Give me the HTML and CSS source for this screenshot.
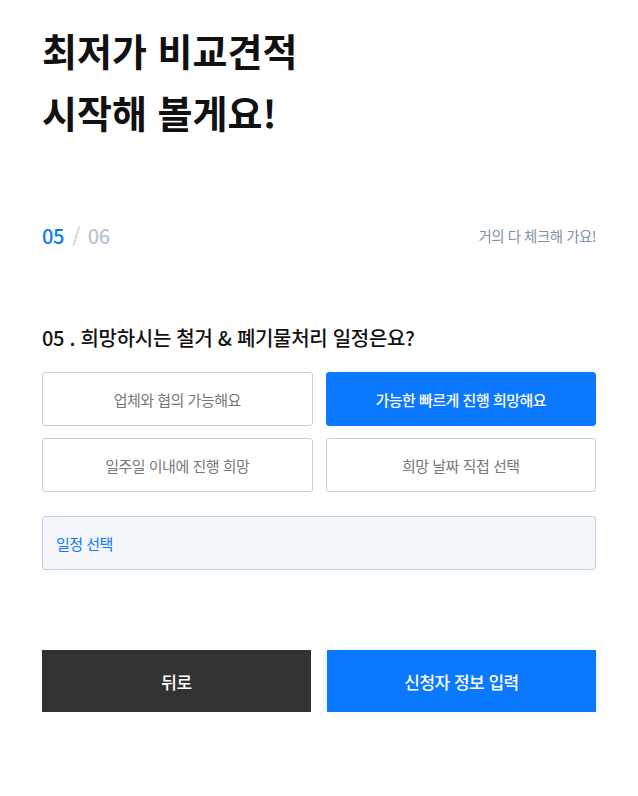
FILE: index.html
```html
<!DOCTYPE html>
<html lang="ko">
<head>
  <meta charset="UTF-8" />
  <meta name="viewport" content="width=device-width, initial-scale=1" />
  <title>견적 요청</title>
  <link rel="stylesheet" href="styles.css">
</head>
<body>

<div class="wrap">
  <h1 class="title">최저가 비교견적<br>시작해 볼게요!</h1>

  <div class="progress">
    <div class="step"><span class="now">05</span><span class="slash">/</span><span class="total">06</span></div>
    <div class="hint">거의 다 체크해 가요!</div>
  </div>

  <h2 class="question">05 . 희망하시는 철거 &amp; 폐기물처리 일정은요?</h2>

  <div class="options">
    <button class="option">업체와 협의 가능해요</button>
    <button class="option active">가능한 빠르게 진행 희망해요</button>
    <button class="option">일주일 이내에 진행 희망</button>
    <button class="option">희망 날짜 직접 선택</button>
  </div>

  <div class="date-field">일정 선택</div>

  <div class="actions">
    <button class="btn back">뒤로</button>
    <button class="btn next">신청자 정보 입력</button>
  </div>
</div>

</body>
</html>
```

FILE: styles.css
```css
body {
  margin: 0;
  background: #fff;
  font-family: "Noto Sans CJK KR", "Noto Sans", sans-serif;
  color: #111;
}
.wrap {
  padding: 19px 42px 0;
}
.title {
  margin: 0;
  font-size: 38px;
  font-weight: 700;
  line-height: 62px;
  letter-spacing: 0;
  color: #111;
}
.progress {
  margin-top: 77px;
  display: flex;
  justify-content: space-between;
  align-items: center;
  height: 30px;
}
.step {
  font-size: 20px;
  font-weight: 500;
  letter-spacing: -0.3px;
}
.now {
  color: #0a78ff;
}
.slash {
  color: #c3cedc;
  margin: 0 8px;
  font-weight: 400;
}
.total {
  color: #b8c5d6;
}
.hint {
  font-size: 14.5px;
  color: #7f91a8;
  letter-spacing: -0.5px;
}
.question {
  margin: 75px 0 0;
  font-size: 20px;
  font-weight: 500;
  line-height: 26px;
  letter-spacing: -0.3px;
  color: #111;
}
.options {
  margin-top: 21px;
  display: grid;
  grid-template-columns: 1fr 1fr;
  gap: 12px 13px;
}
.option {
  height: 54px;
  background: #fff;
  border: 1px solid #c3cedc;
  border-radius: 3px;
  font-family: inherit;
  font-size: 15px;
  color: #777;
  letter-spacing: -0.5px;
  cursor: pointer;
}
.option.active {
  background: #0a78ff;
  border-color: #0a78ff;
  color: #fff;
  font-weight: 500;
}
.date-field {
  margin-top: 24px;
  height: 52px;
  display: flex;
  align-items: center;
  padding: 0 13px;
  background: #f3f6fb;
  border: 1px solid #c3cedc;
  border-radius: 3px;
  font-size: 15px;
  color: #1574ff;
  letter-spacing: -0.5px;
}
.actions {
  margin-top: 80px;
  display: grid;
  grid-template-columns: 1fr 1fr;
  gap: 16px;
}
.btn {
  height: 62px;
  border: none;
  font-family: inherit;
  font-size: 17px;
  font-weight: 500;
  color: #fff;
  letter-spacing: -0.5px;
  cursor: pointer;
}
.btn.back {
  background: #333;
}
.btn.next {
  background: #0a78ff;
  box-shadow: 0 3px 6px rgba(10, 120, 255, 0.2);
}
```
